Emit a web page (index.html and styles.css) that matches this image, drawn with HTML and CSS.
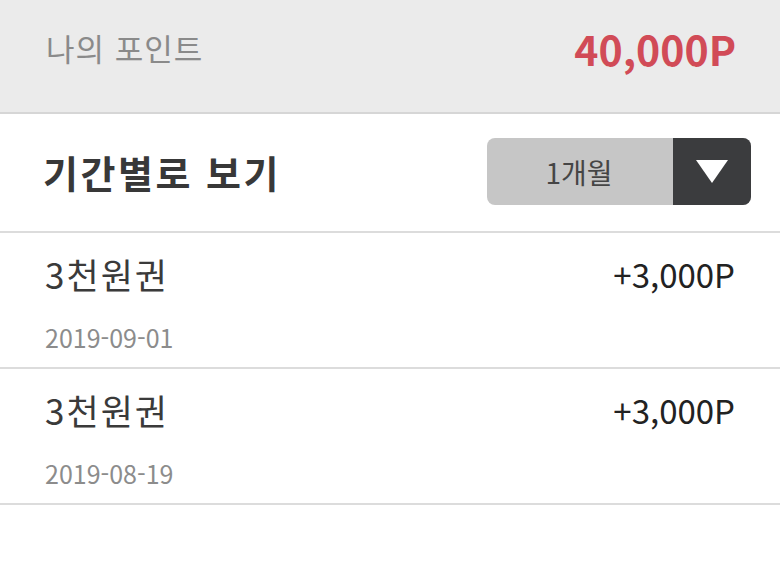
FILE: index.html
```html
<!DOCTYPE html>
<html lang="ko">
<head>
<meta charset="utf-8">
<link rel="stylesheet" href="styles.css">
</head>
<body>
<div class="page">
  <header class="summary">
    <span class="summary-label">나의 포인트</span>
    <span class="summary-value">40,000P</span>
  </header>
  <section class="filter">
    <h2 class="filter-title">기간별로 보기</h2>
    <div class="select">
      <span class="select-value">1개월</span>
      <span class="select-arrow">
        <svg width="32" height="23" viewBox="0 0 32 23"><polygon points="0,0 32,0 16,23" fill="#fff"/></svg>
      </span>
    </div>
  </section>
  <ul class="list">
    <li class="item">
      <div class="item-main">
        <span class="item-title">3천원권</span>
        <span class="item-date">2019-09-01</span>
      </div>
      <span class="item-amount">+3,000P</span>
    </li>
    <li class="item">
      <div class="item-main">
        <span class="item-title">3천원권</span>
        <span class="item-date">2019-08-19</span>
      </div>
      <span class="item-amount">+3,000P</span>
    </li>
  </ul>
</div>
</body>
</html>
```
FILE: styles.css
```css
* { box-sizing: border-box; margin: 0; padding: 0; }
html, body { background: #fff; }
body { font-family: "Noto Sans CJK KR", "Noto Sans", sans-serif; width: 780px; height: 565px; overflow: hidden; }

.summary {
  height: 114px;
  background: #ebebeb;
  border-bottom: 2px solid #d6d6d6;
  display: flex;
  justify-content: space-between;
  align-items: center;
  padding: 0 44px 16px 46px;
}
.summary-label { font-size: 31px; color: #8a8a8a; line-height: 40px; letter-spacing: 1px; }
.summary-value { font-size: 41px; font-weight: 700; color: #d14b57; line-height: 48px; }

.filter {
  height: 119px;
  border-bottom: 2px solid #dcdcdc;
  display: flex;
  justify-content: space-between;
  align-items: center;
  padding: 0 29px 2px 43px;
}
.filter-title { font-size: 38px; font-weight: 700; color: #383838; line-height: 44px; letter-spacing: 2.5px; }
.select {
  width: 264px;
  height: 67px;
  border-radius: 8px;
  overflow: hidden;
  display: flex;
  background: #c6c6c6;
}
.select-value {
  flex: 1;
  display: flex;
  align-items: center;
  justify-content: center;
  font-size: 28px;
  color: #454545;
  padding-right: 2px;
}
.select-arrow {
  width: 78px;
  background: #3b3c3e;
  display: flex;
  align-items: center;
  justify-content: center;
}

.list { list-style: none; }
.item {
  height: 136px;
  border-bottom: 2px solid #dcdcdc;
  display: flex;
  justify-content: space-between;
  align-items: flex-start;
  padding: 21px 45px 0 45px;
}
.item-main { display: flex; flex-direction: column; }
.item-title { font-size: 35px; color: #3a3a3a; line-height: 40px; letter-spacing: 2px; }
.item-date { font-size: 25px; color: #8c8c8c; line-height: 30px; margin-top: 28px; }
.item-amount { font-size: 33px; color: #222; line-height: 40px; }
```
